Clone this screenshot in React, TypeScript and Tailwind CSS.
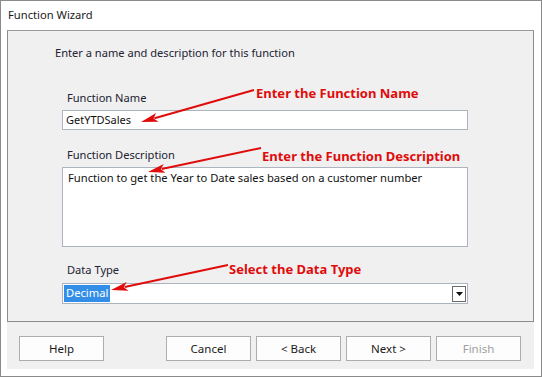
import React from "react";

type ArrowProps = { x1: number; y1: number; x2: number; y2: number };

// red annotation arrow, tip at (x2, y2)
function Arrow({ x1, y1, x2, y2 }: ArrowProps) {
  const dx = x2 - x1;
  const dy = y2 - y1;
  const len = Math.sqrt(dx * dx + dy * dy);
  const ux = dx / len;
  const uy = dy / len;
  const head = 17;
  const half = 4.5;
  const bx = x2 - ux * head;
  const by = y2 - uy * head;
  const px = -uy * half;
  const py = ux * half;
  const points = `${x2},${y2} ${bx + px},${by + py} ${bx + ux * 4},${by + uy * 4} ${bx - px},${by - py}`;
  return (
    <g>
      <line x1={x1} y1={y1} x2={bx + ux * 3} y2={by + uy * 3} stroke="#e00b0b" strokeWidth={2} />
      <polygon points={points} fill="#e00b0b" />
    </g>
  );
}

function WizardButton({ label, disabled }: { label: string; disabled?: boolean }) {
  return (
    <button
      className={`flex h-[25px] w-[85px] items-center justify-center border border-[#adadad] bg-[#fdfdfd] text-[11.5px] ${
        disabled ? "text-[#a0a0a0]" : "text-[#1a1a1a]"
      }`}
    >
      {label}
    </button>
  );
}

export default function App() {
  return (
    <div className="relative flex h-[377px] w-[542px] flex-col border border-[#8a8a8a] bg-white font-['Noto_Sans',sans-serif] text-[11.1px] text-[#222232]">
      {/* Title bar */}
      <div className="flex h-[29px] items-center pl-[7px] text-[11.2px] text-[#1a1a1a]">Function Wizard</div>

      {/* Content */}
      <div className="ml-[6px] flex w-[527px] flex-col border-t border-[#9a9a9a] bg-[#f0f0f0]">
        {/* Panel */}
        <div className="flex h-[291px] flex-col border-x border-b border-[#8c8c8c] pl-[54px] pt-[14px]">
          <div className="-ml-[7px] h-[16px] leading-[16px]">Enter a name and description for this function</div>

          <div className="ml-[5px] mt-[29px] h-[16px] leading-[16px]">Function Name</div>
          <div className="mt-[4px] flex h-[20px] w-[406px] items-center border border-[#acb4bf] bg-white pl-[3px] text-[11px] text-[#111]">
            GetYTDSales
          </div>

          <div className="ml-[5px] mt-[17px] h-[16px] leading-[16px]">Function Description</div>
          <div className="mt-[4px] h-[80px] w-[406px] border border-[#acb4bf] bg-white pl-[5px] pt-[2px] text-[11.2px] leading-[16px] text-[#111]">
            Function to get the Year to Date sales based on a customer number
          </div>

          <div className="ml-[5px] mt-[15px] h-[16px] leading-[16px]">Data Type</div>
          <div className="mt-[5px] flex h-[21px] w-[406px] items-center justify-between border border-[#acb4bf] bg-white pl-[1px] pr-[1px]">
            <span className="flex h-[17px] items-center bg-[#338ee8] px-[2px] text-[11.2px] text-white">Decimal</span>
            <span className="flex h-[16px] w-[14px] items-center justify-center border border-[#6a6a6a] bg-white">
              <svg width="7" height="4" viewBox="0 0 7 4">
                <polygon points="0,0 7,0 3.5,4" fill="#111" />
              </svg>
            </span>
          </div>
        </div>

        {/* Buttons */}
        <div className="flex h-[47px] items-start pl-[12px] pt-[14px]">
          <WizardButton label="Help" />
          <div className="ml-[62px] flex gap-[5px]">
            <WizardButton label="Cancel" />
            <WizardButton label="< Back" />
            <WizardButton label="Next >" />
            <WizardButton label="Finish" disabled />
          </div>
        </div>
      </div>

      {/* Annotations */}
      <svg className="pointer-events-none absolute left-[-1px] top-[-1px]" width="542" height="377">
        <Arrow x1={254} y1={90} x2={141} y2={122} />
        <Arrow x1={261} y1={148} x2={148} y2={172} />
        <Arrow x1={228} y1={265} x2={111} y2={290} />
      </svg>
      <span className="absolute left-[255px] top-[83px] text-[13px] font-bold leading-[18px] text-[#e00b0b]">
        Enter the Function Name
      </span>
      <span className="absolute left-[261px] top-[146px] text-[13px] font-bold leading-[18px] text-[#e00b0b]">
        Enter the Function Description
      </span>
      <span className="absolute left-[228px] top-[259px] text-[13px] font-bold leading-[18px] text-[#e00b0b]">
        Select the Data Type
      </span>
    </div>
  );
}
